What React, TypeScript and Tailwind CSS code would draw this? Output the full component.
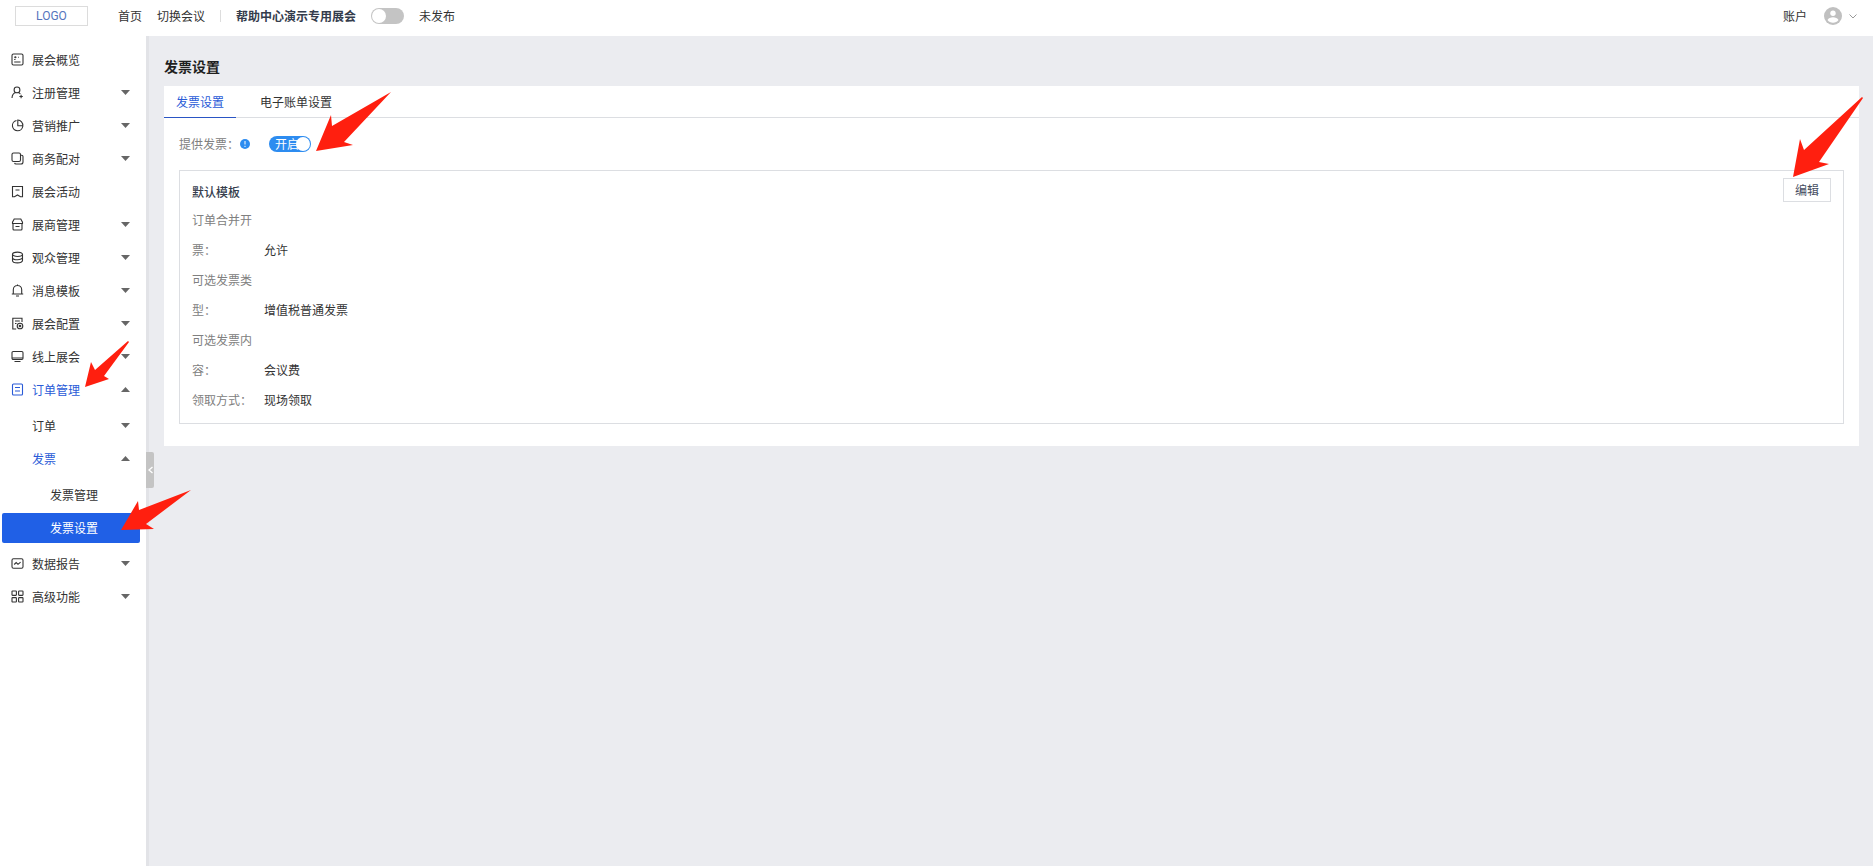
import { useState } from 'react'
import type { ReactNode } from 'react'

interface MenuItem {
  label: string
  icon: ReactNode
  leaf?: boolean
}

const topMenu: MenuItem[] = [
  {
    label: '展会概览',
    icon: (
      <>
        <rect x="1" y="1" width="11" height="11" rx="1.5" />
        <path d="M3.2 4.2h2.3M7 4.2h.8M3.2 6.5h1.3M3.2 9h6.300M4.3 3.2v2" />
      </>
    ),
    leaf: true,
  },
  {
    label: '注册管理',
    icon: (
      <>
        <circle cx="6" cy="3.900" r="2.900" />
        <path d="M1 12c.2-2.800 1.400-4.600 3.300-5.400M7.600 6.500c.8.4 1.300.9 1.700 1.500M8.400 10.500h3.400M10.100 8.800v3.400" />
      </>
    ),
  },
  {
    label: '营销推广',
    icon: (
      <>
        <path d="M5.500 1.500a5.200 5.200 0 1 0 6.300 5.500" />
        <path d="M6.800 1a5.300 5.300 0 0 1 5 5.800H6.800z" />
      </>
    ),
  },
  {
    label: '商务配对',
    icon: (
      <>
        <rect x="1" y="1" width="8.500" height="8.500" rx="1.500" />
        <path d="M10 3.200h.6a1.400 1.400 0 0 1 1.400 1.400v5.400a2 2 0 0 1-2 2H5a1.500 1.500 0 0 1-1.400-1.200" />
      </>
    ),
  },
  { label: '展会活动', icon: <path d="M1.500 1.500h10v10.300h-2l-3-1.800-3 1.800h-2zM4.500 5h4" />, leaf: true },
  {
    label: '展商管理',
    icon: <path d="M3.200 1h6.600l1.700 3.200v1.300h-10V4.200zM2 5.500V11a1 1 0 0 0 1 1h7a1 1 0 0 0 1-1V5.500M4.500 8.500h4" />,
  },
  {
    label: '观众管理',
    icon: (
      <>
        <ellipse cx="6.500" cy="3.300" rx="5" ry="2.200" />
        <path d="M1.500 3.300v6.200c0 1.300 2.200 2.400 5 2.400s5-1.100 5-2.400V3.300M1.500 6.400c0 1.300 2.200 2.300 5 2.300s5-1 5-2.300" />
      </>
    ),
  },
  { label: '消息模板', icon: <path d="M.8 10h11.400M2.300 10V5.700a4.200 4.200 0 0 1 8.400 0V10M5 12h3M6.500 1.400V.4" /> },
  {
    label: '展会配置',
    icon: (
      <>
        <path d="M11 5V1.200H1.800V12h3.400M4 4h4.800M4 6.500h1.500" />
        <circle cx="9" cy="9" r="2.800" />
        <circle cx="9" cy="9" r=".8" />
      </>
    ),
  },
  {
    label: '线上展会',
    icon: (
      <>
        <rect x="1" y="1.500" width="11" height="8" rx="1.200" />
        <path d="M1 8h11M3.500 11.500h6" />
      </>
    ),
  },
]

const bottomMenu: MenuItem[] = [
  {
    label: '数据报告',
    icon: (
      <>
        <rect x="1" y="1.800" width="11" height="9.400" rx="1.500" />
        <path d="M3.200 7.500l2-2 1.800 1.800 2.600-2.200" />
      </>
    ),
  },
  {
    label: '高级功能',
    icon: (
      <>
        <rect x="1" y="1" width="4.400" height="4.400" rx=".6" />
        <rect x="7.600" y="1" width="4.400" height="4.400" rx=".6" />
        <rect x="1" y="7.600" width="4.400" height="4.400" rx=".6" />
        <rect x="7.600" y="7.600" width="4.400" height="4.400" rx=".6" />
      </>
    ),
  },
]

const orderIcon = (
  <>
    <rect x="1.500" y="1" width="10" height="11" rx="1" />
    <path d="M4 4.500h5M4 8h5" />
  </>
)

const fields = [
  { label: '订单合并开票：', value: '允许' },
  { label: '可选发票类型：', value: '增值税普通发票' },
  { label: '可选发票内容：', value: '会议费' },
  { label: '领取方式：', value: '现场领取' },
]

function MenuIcon({ children }: { children: ReactNode }) {
  return (
    <svg viewBox="0 0 13 13" className="w-[13px] h-[13px] shrink-0" fill="none" stroke="currentColor" strokeWidth="1.1">
      {children}
    </svg>
  )
}

function Caret({ up }: { up?: boolean }) {
  return (
    <svg viewBox="0 0 9 5" className="ml-auto w-[9px] h-[5px] text-[#666]" fill="currentColor">
      <path d={up ? 'M0 5L4.500 0L9 5z' : 'M0 0h9L4.500 5z'} />
    </svg>
  )
}

function MenuRow({ item, active, open }: { item: MenuItem; active?: boolean; open?: boolean }) {
  return (
    <button className={`flex w-full h-[33px] items-center gap-2 pl-[11px] pr-4 ${active ? 'text-[#2a5bd7]' : 'text-[#333]'}`}>
      <MenuIcon>{item.icon}</MenuIcon>
      {item.label}
      {!item.leaf && <Caret up={open} />}
    </button>
  )
}

function Arrow({ className, viewBox, points }: { className: string; viewBox: string; points: string }) {
  return (
    <svg viewBox={viewBox} className={`absolute z-10 pointer-events-none ${className}`} fill="#ff1f0f">
      <polygon points={points} />
    </svg>
  )
}

export default function App() {
  const [published, setPublished] = useState(false)
  const [invoice, setInvoice] = useState(true)

  return (
    <div className="flex flex-col min-h-screen bg-[#ebecf0] text-xs text-[#333] font-['Noto_Sans_CJK_SC',sans-serif]">
      <header className="flex h-9 items-center bg-white pl-[15px] pr-4 pb-1">
        <a href="#" className="flex w-[73px] h-5 items-center justify-center border border-[#dcdcdc] text-[#5574bd] font-[Roboto,sans-serif]">
          LOGO
        </a>
        <nav className="flex items-center gap-[15px] ml-[30px]">
          <a href="#">首页</a>
          <a href="#">切换会议</a>
        </nav>
        <span className="w-px h-3 mx-[15px] bg-[#ddd]" />
        <span className="font-bold text-[#343c4c]">帮助中心演示专用展会</span>
        <button
          role="switch"
          aria-checked={published}
          aria-label="未发布"
          onClick={() => setPublished(!published)}
          className={`flex w-[33px] h-4 mx-[15px] rounded-full p-px ${published ? 'justify-end bg-[#2d8cf0]' : 'bg-[#c4c4c4]'}`}
        >
          <span className="w-[14px] h-[14px] rounded-full bg-white" />
        </button>
        <span>未发布</span>
        <button className="flex items-center ml-auto">
          账户
          <svg viewBox="0 0 18 18" className="w-[18px] h-[18px] ml-[17px]">
            <circle cx="9" cy="9" r="9" fill="#c0c0c0" />
            <circle cx="9" cy="6.300" r="2.700" fill="#fff" />
            <path d="M3.500 13c1-2 3-2.800 5.500-2.800s4.500.8 5.500 2.800c-1.300 1.800-3.200 2.700-5.500 2.700S4.800 14.800 3.500 13z" fill="#fff" />
          </svg>
          <svg viewBox="0 0 8 5" className="w-2 h-[5px] ml-[7px]" fill="none" stroke="#999">
            <path d="M.5.5L4 4L7.500.5" />
          </svg>
        </button>
      </header>

      <div className="flex flex-1">
        <aside className="relative w-[149px] shrink-0 border-r-[3px] border-[#e2e3e7] bg-white pt-[7px]">
          {topMenu.map((item) => (
            <MenuRow key={item.label} item={item} />
          ))}
          <div className="relative">
            <MenuRow item={{ label: '订单管理', icon: orderIcon }} active open />
            <Arrow className="left-[85px] -top-[33px] w-11 h-12" viewBox="0 0 44 48" points="0,47 6,22 10,30 43,1 44,2 19,36 24,39" />
          </div>
          <div className="py-[3px]">
            <button className="flex w-full h-[33px] items-center pl-8 pr-4">
              订单
              <Caret />
            </button>
            <button className="flex w-full h-[33px] items-center pl-8 pr-4 text-[#2a5bd7]">
              发票
              <Caret up />
            </button>
            <div className="relative pt-[3px]">
              <a href="#" className="flex h-[33px] items-center pl-[50px]">
                发票管理
              </a>
              <a href="#" className="flex h-[30px] items-center mt-[2px] mb-px ml-[2px] mr-[6px] rounded-xs bg-[#2060e6] pl-12 text-white">
                发票设置
              </a>
              <Arrow className="left-[121px] top-[15px] w-[70px] h-10" viewBox="0 0 70 40" points="0,40 17,11 18,20 70,0 25,34 33,39" />
            </div>
          </div>
          {bottomMenu.map((item) => (
            <MenuRow key={item.label} item={item} />
          ))}
          <button aria-label="collapse" className="absolute left-[146px] top-[416px] flex w-2 h-9 items-center justify-center rounded-r-xs bg-[#c4c4c4]">
            <svg viewBox="0 0 5 8" className="w-[5px] h-2" fill="none" stroke="#fff" strokeWidth="1.300">
              <path d="M4.500 1L1 4l3.500 3" />
            </svg>
          </button>
        </aside>

        <main className="flex-1 pl-[15px] pr-[14px] pt-5">
          <h1 className="text-sm leading-5 font-bold text-[#1f1f1f]">发票设置</h1>
          <section className="mt-[10px] bg-white pb-[22px]">
            <div role="tablist" className="flex h-8 gap-3 border-b border-[#dcdee2]">
              <button role="tab" aria-selected className="h-8 px-3 border-b border-[#2a55c4] text-[#2a5bd7]">
                发票设置
              </button>
              <button role="tab" aria-selected={false} className="h-8 px-3">
                电子账单设置
              </button>
            </div>

            <div className="relative flex h-[52px] items-center pl-[15px]">
              <span id="invoice-label" className="text-[#808080]">提供发票：</span>
              <svg viewBox="0 0 10 10" className="w-[10px] h-[10px] ml-px">
                <circle cx="5" cy="5" r="5" fill="#2d8cf0" />
                <path d="M5 2v3.500M5 6.800v1.200" stroke="#fff" />
              </svg>
              <button
                role="switch"
                aria-checked={invoice}
                aria-labelledby="invoice-label"
                onClick={() => setInvoice(!invoice)}
                className={`relative flex w-[42px] h-4 ml-[19px] items-center rounded-full px-[6px] leading-4 text-white ${invoice ? 'bg-[#2d8cf0]' : 'bg-[#c4c4c4]'}`}
              >
                开启
                <span className="absolute right-px w-[14px] h-[14px] rounded-full bg-white" />
              </button>
              <Arrow className="left-[152px] -top-[26px] w-[75px] h-[60px]" viewBox="0 0 75 60" points="0,59 15,23 16,34 75,0 28,50 37,53" />
            </div>

            <div className="relative mx-[15px] border border-[#dcdee2] px-3 pt-[7px] pb-2">
              <div className="flex items-start justify-between">
                <h2 className="leading-[27px] font-medium text-[#343c4c]">默认模板</h2>
                <button className="w-12 h-6 border border-[#dcdee2] bg-white text-[#444c60]">编辑</button>
              </div>
              <dl>
                {fields.map((field) => (
                  <div key={field.label} className="flex items-end leading-[30px]">
                    <dt className="w-[72px] pr-3 text-[#808080]">{field.label}</dt>
                    <dd>{field.value}</dd>
                  </div>
                ))}
              </dl>
              <Arrow className="-right-5 -top-[74px] w-[70px] h-20" viewBox="0 0 70 80" points="0,80 7,42 11,53 69,0 70,1 26,65 36,67" />
            </div>
          </section>
        </main>
      </div>
    </div>
  )
}
